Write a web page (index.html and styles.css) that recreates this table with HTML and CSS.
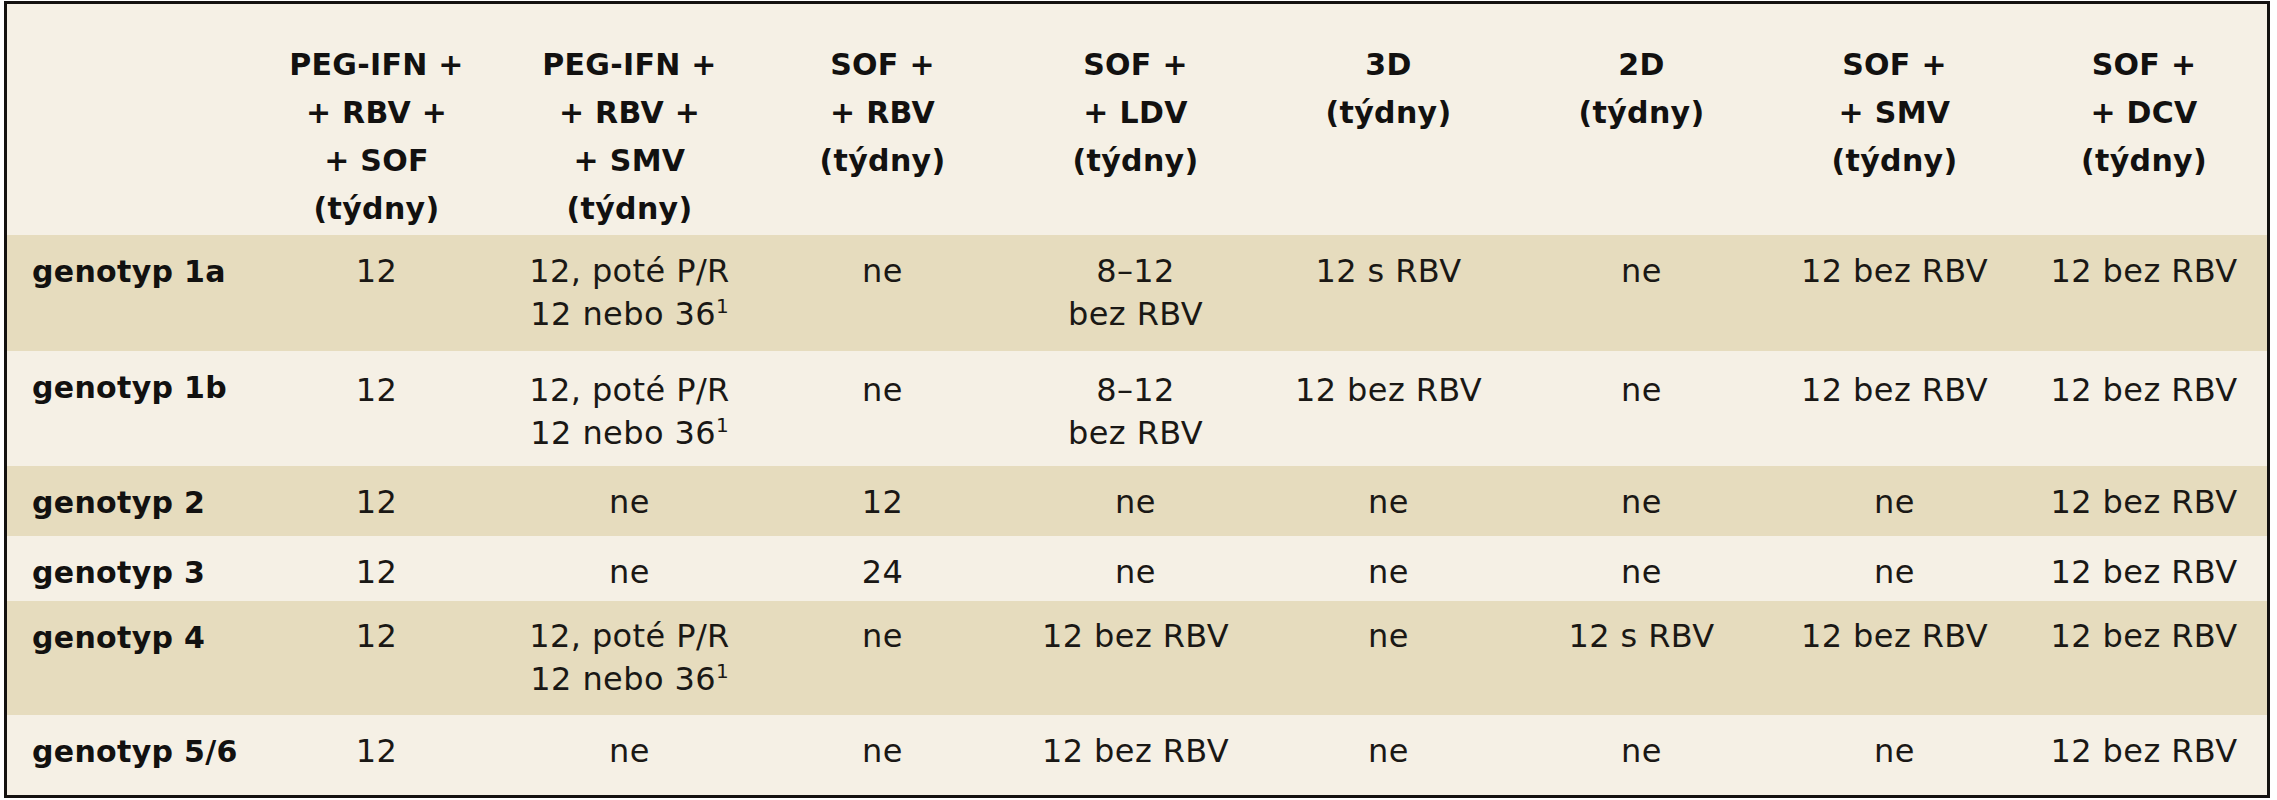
FILE: index.html
```html
<!DOCTYPE html>
<html lang="cs">
<head>
<meta charset="utf-8">
<title>Léčebné režimy podle genotypu</title>
<link rel="stylesheet" href="styles.css">
</head>
<body>
<div class="frame">
  <table class="regimens">
    <colgroup>
      <col class="c-label">
      <col class="c-data"><col class="c-data"><col class="c-data"><col class="c-data">
      <col class="c-data"><col class="c-data"><col class="c-data">
      <col class="c-last">
    </colgroup>
    <thead>
      <tr class="r-head">
        <th class="label"></th>
        <th>PEG-IFN +<br>+ RBV +<br>+ SOF<br>(týdny)</th>
        <th>PEG-IFN +<br>+ RBV +<br>+ SMV<br>(týdny)</th>
        <th>SOF +<br>+ RBV<br>(týdny)</th>
        <th>SOF +<br>+ LDV<br>(týdny)</th>
        <th>3D<br>(týdny)</th>
        <th>2D<br>(týdny)</th>
        <th>SOF +<br>+ SMV<br>(týdny)</th>
        <th>SOF +<br>+ DCV<br>(týdny)</th>
      </tr>
    </thead>
    <tbody>
      <tr class="band r-1a">
        <th class="label">genotyp 1a</th>
        <td>12</td>
        <td>12, poté P/R<br>12 nebo 36<span class="sup">1</span></td>
        <td>ne</td>
        <td>8–12<br>bez RBV</td>
        <td>12 s RBV</td>
        <td>ne</td>
        <td>12 bez RBV</td>
        <td>12 bez RBV</td>
      </tr>
      <tr class="r-1b">
        <th class="label">genotyp 1b</th>
        <td>12</td>
        <td>12, poté P/R<br>12 nebo 36<span class="sup">1</span></td>
        <td>ne</td>
        <td>8–12<br>bez RBV</td>
        <td>12 bez RBV</td>
        <td>ne</td>
        <td>12 bez RBV</td>
        <td>12 bez RBV</td>
      </tr>
      <tr class="band r-2">
        <th class="label">genotyp 2</th>
        <td>12</td>
        <td>ne</td>
        <td>12</td>
        <td>ne</td>
        <td>ne</td>
        <td>ne</td>
        <td>ne</td>
        <td>12 bez RBV</td>
      </tr>
      <tr class="r-3">
        <th class="label">genotyp 3</th>
        <td>12</td>
        <td>ne</td>
        <td>24</td>
        <td>ne</td>
        <td>ne</td>
        <td>ne</td>
        <td>ne</td>
        <td>12 bez RBV</td>
      </tr>
      <tr class="band r-4">
        <th class="label">genotyp 4</th>
        <td>12</td>
        <td>12, poté P/R<br>12 nebo 36<span class="sup">1</span></td>
        <td>ne</td>
        <td>12 bez RBV</td>
        <td>ne</td>
        <td>12 s RBV</td>
        <td>12 bez RBV</td>
        <td>12 bez RBV</td>
      </tr>
      <tr class="r-56">
        <th class="label">genotyp 5/6</th>
        <td>12</td>
        <td>ne</td>
        <td>ne</td>
        <td>12 bez RBV</td>
        <td>ne</td>
        <td>ne</td>
        <td>ne</td>
        <td>12 bez RBV</td>
      </tr>
    </tbody>
  </table>
</div>
</body>
</html>
```

FILE: styles.css
```css
html, body {
  margin: 0;
  padding: 0;
  background: #ffffff;
}

body {
  font-family: "DejaVu Sans", "Liberation Sans", sans-serif;
  color: #1a1815;
}

.frame {
  margin: 1px 0 0 4px;
  width: 2266px;
  height: 797px;
  box-sizing: border-box;
  border: 3px solid #141210;
  background: #f5f0e5;
}

.regimens {
  width: 2260px;
  border-collapse: collapse;
  border-spacing: 0;
  table-layout: fixed;
}

.c-label { width: 243px; }
.c-data { width: 253px; }
.c-last { width: 246px; }

.regimens th,
.regimens td {
  padding: 0;
  vertical-align: top;
  text-align: center;
}

/* header */
.r-head { height: 231px; }
.r-head th {
  padding-top: 37px;
  font-weight: bold;
  font-size: 30px;
  line-height: 48px;
  letter-spacing: 0.3px;
  color: #121110;
}

/* body rows */
.regimens td {
  padding-top: 15px;
  font-size: 32px;
  line-height: 43px;
  letter-spacing: 0.4px;
  font-weight: normal;
}

.regimens tbody th.label {
  text-align: left;
  padding-left: 25px;
  padding-top: 15px;
  font-weight: bold;
  font-size: 30px;
  line-height: 43px;
  letter-spacing: 0.3px;
  color: #121110;
}

.r-1a { height: 116px; }
.r-1b { height: 115px; }
.r-2 { height: 70px; }
.r-3 { height: 65px; }
.r-4 { height: 114px; }
.r-56 { height: 80px; }

.r-1a td, .r-1a th.label {
  padding-top: 15px;
}

.r-1b td, .r-1b th.label {
  padding-top: 18px;
}

.r-4 td, .r-4 th.label {
  padding-top: 14px;
}

.band {
  background: #e6dcbe;
}

.sup {
  font-size: 20px;
  letter-spacing: 0;
  line-height: 0;
  vertical-align: 12px;
}
```
